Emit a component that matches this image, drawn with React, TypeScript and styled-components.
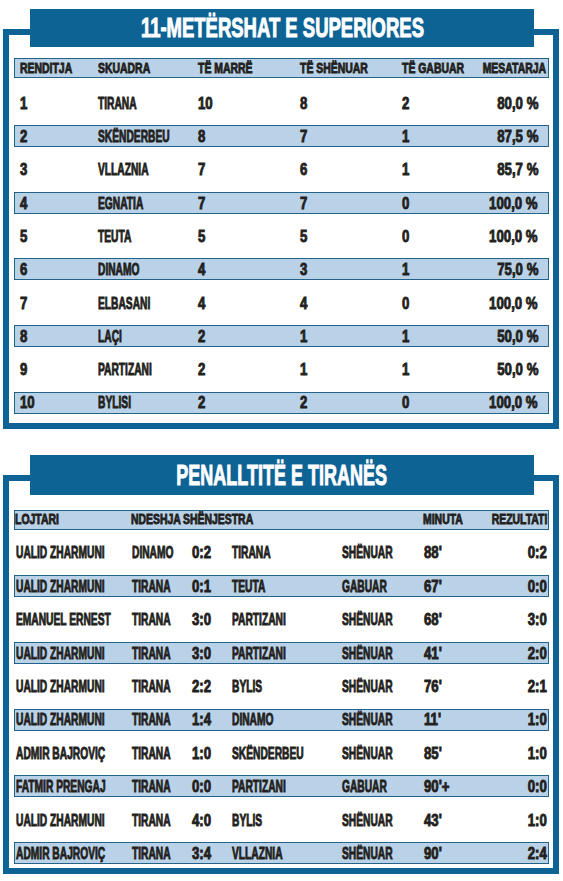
import React from "react";
import styled, { createGlobalStyle } from "styled-components";

const GlobalStyle = createGlobalStyle`
  body {
    margin: 0;
    background: #ffffff;
    font-family: "Liberation Sans", Arial, sans-serif;
    color: #231f20;
  }
`;

const BLUE = "#0c6394";

const Page = styled.div`
  width: 563px;
  padding-top: 29px;
`;

const Frame = styled.section<{ $gap?: number; $padBottom: number }>`
  margin: ${(p) => p.$gap || 0}px 4px 0 3px;
  border: 6px solid ${BLUE};
  padding: 0 4px ${(p) => p.$padBottom}px 5px;
`;

const Banner = styled.div<{ $h: number }>`
  margin: -26px 15px 0 16px;
  height: ${(p) => p.$h}px;
  background: ${BLUE};
  display: flex;
  align-items: center;
  justify-content: center;
`;

const Title = styled.h2<{ $size: number; $squeeze: number }>`
  margin: 0;
  color: #ffffff;
  font-size: ${(p) => p.$size}px;
  font-weight: 700;
  white-space: nowrap;
  -webkit-text-stroke: 1px #ffffff;
  transform: scaleX(${(p) => p.$squeeze});
`;

const Rows = styled.div<{ $top: number; $gap: number }>`
  display: flex;
  flex-direction: column;
  gap: ${(p) => p.$gap}px;
  margin-top: ${(p) => p.$top}px;
`;

const Row = styled.div<{ $cols: string; $shade?: boolean; $head?: boolean; $indent: number }>`
  display: grid;
  grid-template-columns: ${(p) => p.$cols};
  align-items: center;
  height: ${(p) => (p.$head ? 20 : 22)}px;
  box-sizing: border-box;
  padding-left: ${(p) => p.$indent}px;
  border: 1.5px solid ${(p) => (p.$shade || p.$head ? "#22638c" : "transparent")};
  background: ${(p) => (p.$shade || p.$head ? "#bad2e8" : "transparent")};
  font-size: ${(p) => (p.$head ? 14.5 : 16.5)}px;
  font-weight: 700;
  line-height: 1;
  -webkit-text-stroke: 0.9px #231f20;
`;

const Cell = styled.div<{ $right?: boolean; $pad?: number; $num?: boolean; $squeeze?: number }>`
  white-space: nowrap;
  justify-self: ${(p) => (p.$right ? "unsafe end" : "start")};
  padding-right: ${(p) => p.$pad || 0}px;
  transform: scaleX(${(p) => p.$squeeze || (p.$num ? 0.8 : 0.62)});
  transform-origin: ${(p) => (p.$right ? `calc(100% - ${p.$pad || 0}px)` : "left")} center;
`;

const HeadCell = styled(Cell).attrs({ $squeeze: 0.72 })``;

const standings = [
  ["1", "TIRANA", "10", "8", "2", "80,0 %"],
  ["2", "SKËNDERBEU", "8", "7", "1", "87,5 %"],
  ["3", "VLLAZNIA", "7", "6", "1", "85,7 %"],
  ["4", "EGNATIA", "7", "7", "0", "100,0 %"],
  ["5", "TEUTA", "5", "5", "0", "100,0 %"],
  ["6", "DINAMO", "4", "3", "1", "75,0 %"],
  ["7", "ELBASANI", "4", "4", "0", "100,0 %"],
  ["8", "LAÇI", "2", "1", "1", "50,0 %"],
  ["9", "PARTIZANI", "2", "1", "1", "50,0 %"],
  ["10", "BYLISI", "2", "2", "0", "100,0 %"],
];

const penalties = [
  ["UALID ZHARMUNI", "DINAMO", "0:2", "TIRANA", "SHËNUAR", "88'", "0:2"],
  ["UALID ZHARMUNI", "TIRANA", "0:1", "TEUTA", "GABUAR", "67'", "0:0"],
  ["EMANUEL ERNEST", "TIRANA", "3:0", "PARTIZANI", "SHËNUAR", "68'", "3:0"],
  ["UALID ZHARMUNI", "TIRANA", "3:0", "PARTIZANI", "SHËNUAR", "41'", "2:0"],
  ["UALID ZHARMUNI", "TIRANA", "2:2", "BYLIS", "SHËNUAR", "76'", "2:1"],
  ["UALID ZHARMUNI", "TIRANA", "1:4", "DINAMO", "SHËNUAR", "11'", "1:0"],
  ["ADMIR BAJROVIÇ", "TIRANA", "1:0", "SKËNDERBEU", "SHËNUAR", "85'", "1:0"],
  ["FATMIR PRENGAJ", "TIRANA", "0:0", "PARTIZANI", "GABUAR", "90'+", "0:0"],
  ["UALID ZHARMUNI", "TIRANA", "4:0", "BYLIS", "SHËNUAR", "43'", "1:0"],
  ["ADMIR BAJROVIÇ", "TIRANA", "3:4", "VLLAZNIA", "SHËNUAR", "90'", "2:4"],
];

// column templates, measured from the left edge of each row
const STAND_COLS = "78px 100px 102px 102px 60px minmax(0, 1fr)";
const PEN_COLS = "116px 60px 40px 110px 82px 60px minmax(0, 1fr)";
const PEN_HEAD_COLS = "116px 52px 240px 60px minmax(0, 1fr)";

export default function App() {
  return (
    <Page>
      <GlobalStyle />

      <Frame $padBottom={9}>
        <Banner $h={38}>
          <Title $size={28} $squeeze={0.66}>
            11-METËRSHAT E SUPERIORES
          </Title>
        </Banner>
        <Rows $top={11} $gap={0}>
          <Row $cols={STAND_COLS} $head $indent={5}>
            <HeadCell>RENDITJA</HeadCell>
            <HeadCell>SKUADRA</HeadCell>
            <HeadCell>TË MARRË</HeadCell>
            <HeadCell>TË SHËNUAR</HeadCell>
            <HeadCell>TË GABUAR</HeadCell>
            <HeadCell $right $pad={2}>
              MESATARJA
            </HeadCell>
          </Row>
        </Rows>
        <Rows $top={14} $gap={11.3}>
          {standings.map((r, i) => (
            <Row key={i} $cols={STAND_COLS} $shade={i % 2 === 1} $indent={5}>
              <Cell $num>{r[0]}</Cell>
              <Cell>{r[1]}</Cell>
              <Cell $num>{r[2]}</Cell>
              <Cell $num>{r[3]}</Cell>
              <Cell $num>{r[4]}</Cell>
              <Cell $num $right $pad={10}>
                {r[5]}
              </Cell>
            </Row>
          ))}
        </Rows>
      </Frame>

      <Frame $gap={46} $padBottom={4}>
        <Banner $h={40}>
          <Title $size={30} $squeeze={0.6}>
            PENALLTITË E TIRANËS
          </Title>
        </Banner>
        <Rows $top={15} $gap={0}>
          <Row $cols={PEN_HEAD_COLS} $head $indent={0}>
            <HeadCell>LOJTARI</HeadCell>
            <HeadCell>NDESHJA</HeadCell>
            <HeadCell>SHËNJESTRA</HeadCell>
            <HeadCell>MINUTA</HeadCell>
            <HeadCell $right $pad={1}>
              REZULTATI
            </HeadCell>
          </Row>
        </Rows>
        <Rows $top={12} $gap={11.4}>
          {penalties.map((r, i) => (
            <Row key={i} $cols={PEN_COLS} $shade={i % 2 === 1} $indent={1}>
              <Cell>{r[0]}</Cell>
              <Cell>{r[1]}</Cell>
              <Cell $num>{r[2]}</Cell>
              <Cell>{r[3]}</Cell>
              <Cell>{r[4]}</Cell>
              <Cell $num>{r[5]}</Cell>
              <Cell $num $right $pad={1}>
                {r[6]}
              </Cell>
            </Row>
          ))}
        </Rows>
      </Frame>
    </Page>
  );
}
